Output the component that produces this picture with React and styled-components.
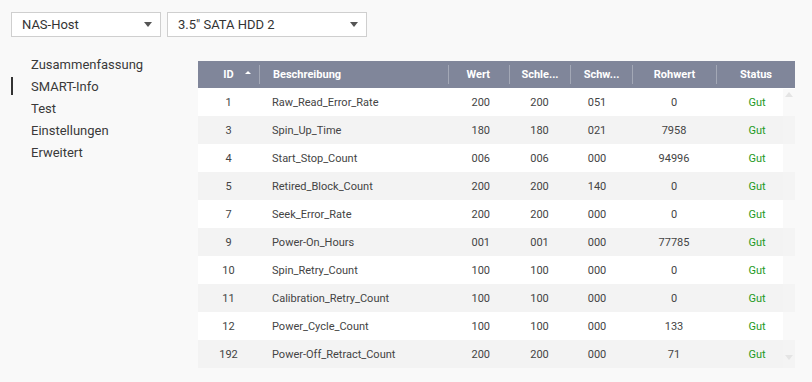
import React from 'react';
import styled, { createGlobalStyle } from 'styled-components';

const GlobalStyle = createGlobalStyle`
  html, body {
    margin: 0;
    padding: 0;
    background: #f9f9f9;
    font-family: Roboto, "Liberation Sans", Arial, sans-serif;
    color: #333;
  }
`;

const Page = styled.div`
  width: 812px;
  height: 382px;
  box-sizing: border-box;
  padding: 12px 11px 0 11px;
  display: flex;
  flex-direction: column;
`;

const Toolbar = styled.div`
  display: flex;
  gap: 6px;
`;

const Select = styled.div`
  width: ${props => props.width}px;
  height: 25px;
  box-sizing: border-box;
  background: #fff;
  border: 1px solid #cfcfcf;
  display: flex;
  align-items: center;
  justify-content: space-between;
  padding: 0 8px 0 10px;
  font-size: 13px;
  color: #333;
`;

const Caret = styled.span`
  width: 0;
  height: 0;
  border-left: 4px solid transparent;
  border-right: 4px solid transparent;
  border-top: 5px solid #555;
`;

const Content = styled.div`
  display: flex;
  margin-top: 24px;
`;

const Sidebar = styled.nav`
  width: 187px;
  display: flex;
  flex-direction: column;
  margin-top: -8px;
`;

const NavItem = styled.div`
  height: 22px;
  display: flex;
  align-items: center;
  padding-left: 18px;
  font-size: 13px;
  color: #3a3a3a;
  box-sizing: border-box;
  border-left: 2px solid transparent;
  border-image: ${props =>
    props.active ? 'linear-gradient(transparent 3px, #333 3px, #333 19px, transparent 19px) 1' : 'none'};
`;

const Table = styled.div`
  width: 597px;
  position: relative;
  font-size: 11px;
`;

const HeadRow = styled.div`
  display: grid;
  grid-template-columns: 61px 189px 61px 61px 62px 84px 79px;
  height: 27px;
  background: #80869a;
  color: #fff;
  font-weight: 700;
`;

const HeadCell = styled.div`
  display: flex;
  align-items: center;
  justify-content: ${props => props.align || 'center'};
  padding: ${props => props.pad || '0'};
  border-left: ${props => (props.first ? 'none' : '1px solid #a3a8b6')};
  margin: 4px 0;
  white-space: nowrap;
`;

const SortArrow = styled.span`
  width: 0;
  height: 0;
  border-left: 3px solid transparent;
  border-right: 3px solid transparent;
  border-bottom: 3px solid #fff;
  margin-left: 11px;
  margin-top: -5px;
`;

const Row = styled.div`
  display: grid;
  grid-template-columns: 61px 189px 61px 61px 62px 84px 79px;
  height: 28px;
  background: ${props => (props.odd ? '#f3f3f3' : '#fff')};
  color: #444;
`;

const Cell = styled.div`
  display: flex;
  align-items: center;
  justify-content: ${props => props.align || 'center'};
  padding: ${props => props.pad || '0'};
  color: ${props => props.color || 'inherit'};
  white-space: nowrap;
`;

const ScrollTrack = styled.div`
  position: absolute;
  right: 0;
  top: 28px;
  bottom: 0;
  width: 12px;
  background: rgba(245, 245, 245, 0.6);
  display: flex;
  flex-direction: column;
  justify-content: space-between;
  align-items: center;
  padding: 3px 0 8px;
  box-sizing: border-box;
`;

const ScrollArrow = styled.span`
  width: 0;
  height: 0;
  border-left: 4px solid transparent;
  border-right: 4px solid transparent;
  ${props => (props.down ? 'border-top: 5px solid #e4e4e4;' : 'border-bottom: 5px solid #e4e4e4;')}
`;

const rows = [
  ['1', 'Raw_Read_Error_Rate', '200', '200', '051', '0'],
  ['3', 'Spin_Up_Time', '180', '180', '021', '7958'],
  ['4', 'Start_Stop_Count', '006', '006', '000', '94996'],
  ['5', 'Retired_Block_Count', '200', '200', '140', '0'],
  ['7', 'Seek_Error_Rate', '200', '200', '000', '0'],
  ['9', 'Power-On_Hours', '001', '001', '000', '77785'],
  ['10', 'Spin_Retry_Count', '100', '100', '000', '0'],
  ['11', 'Calibration_Retry_Count', '100', '100', '000', '0'],
  ['12', 'Power_Cycle_Count', '100', '100', '000', '133'],
  ['192', 'Power-Off_Retract_Count', '200', '200', '000', '71'],
];

const navItems = ['Zusammenfassung', 'SMART-Info', 'Test', 'Einstellungen', 'Erweitert'];

export default function App() {
  return (
    <>
      <GlobalStyle />
      <Page>
        <Toolbar>
          <Select width={150}>
            NAS-Host
            <Caret />
          </Select>
          <Select width={200}>
            3.5" SATA HDD 2
            <Caret />
          </Select>
        </Toolbar>
        <Content>
          <Sidebar>
            {navItems.map(item => (
              <NavItem key={item} active={item === 'SMART-Info'}>
                {item}
              </NavItem>
            ))}
          </Sidebar>
          <Table>
            <HeadRow>
              <HeadCell first pad="0 0 0 17px">
                ID
                <SortArrow />
              </HeadCell>
              <HeadCell align="flex-start" pad="0 0 0 13px">Beschreibung</HeadCell>
              <HeadCell align="flex-end" pad="0 19px 0 0">Wert</HeadCell>
              <HeadCell>Schle...</HeadCell>
              <HeadCell>Schw...</HeadCell>
              <HeadCell>Rohwert</HeadCell>
              <HeadCell>Status</HeadCell>
            </HeadRow>
            {rows.map((r, i) => (
              <Row key={r[0]} odd={i % 2 === 1}>
                <Cell>{r[0]}</Cell>
                <Cell align="flex-start" pad="0 0 0 13px">{r[1]}</Cell>
                <Cell align="flex-end" pad="0 19px 0 0">{r[2]}</Cell>
                <Cell>{r[3]}</Cell>
                <Cell pad="0 8px 0 0">{r[4]}</Cell>
                <Cell>{r[5]}</Cell>
                <Cell color="#1f9a1f" pad="0 0 0 3px">Gut</Cell>
              </Row>
            ))}
            <ScrollTrack>
              <ScrollArrow />
              <ScrollArrow down />
            </ScrollTrack>
          </Table>
        </Content>
      </Page>
    </>
  );
}
